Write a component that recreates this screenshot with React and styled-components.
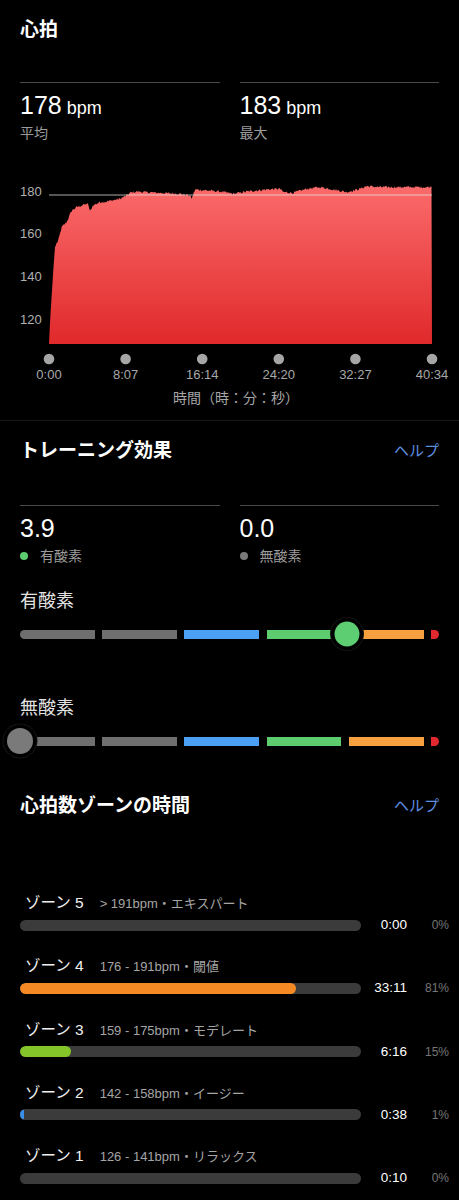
import React from 'react';
import styled, { createGlobalStyle } from 'styled-components';

const GlobalStyle = createGlobalStyle`
  html, body { margin: 0; padding: 0; background: #000; }
  body {
    font-family: "Liberation Sans", "Noto Sans CJK JP", sans-serif;
    color: #fff;
    -webkit-font-smoothing: antialiased;
  }
`;

const Page = styled.div`
  width: 459px;
  background: #000;
  padding-bottom: 12px;
`;

const Section = styled.section`
  padding: 0 20px;
`;

const Title = styled.h2`
  margin: 0;
  padding-top: ${p => p.$top || 0}px;
  font-size: 19px;
  line-height: 24px;
  height: 24px;
  font-weight: 700;
  color: #fff;
  box-sizing: content-box;
`;

const HeaderRow = styled.div`
  display: flex;
  justify-content: space-between;
  align-items: center;
  height: 24px;
  padding-top: ${p => p.$top || 0}px;
  margin-top: ${p => p.$mt || 0}px;
`;

const Help = styled.span`
  font-size: 15px;
  line-height: 24px;
  color: #5d8fe0;
`;

const StatsGrid = styled.div`
  display: grid;
  grid-template-columns: 1fr 1fr;
  column-gap: 20px;
  margin-top: ${p => p.$mt}px;
`;

const Stat = styled.div`
  border-top: 1px solid #4a4a4a;
  padding-top: ${p => p.$pt || 7}px;
`;

const Value = styled.div`
  font-size: 25px;
  line-height: 30px;
  height: 30px;
  color: #fff;
`;

const Unit = styled.span`
  font-size: 18px;
  margin-left: 5px;
`;

const StatLabel = styled.div`
  display: flex;
  align-items: center;
  gap: 12px;
  margin-top: 3px;
  height: 20px;
  font-size: 14px;
  line-height: 20px;
  color: #9c9c9c;
`;

const Dot = styled.span`
  width: 8px;
  height: 8px;
  border-radius: 50%;
  background: ${p => p.$c};
`;

const ChartSvg = styled.svg`
  display: block;
  width: 459px;
  height: 208px;
  margin-top: 37px;
`;

const AxisTitle = styled.div`
  padding-left: 13px;
  text-align: center;
  font-size: 14px;
  line-height: 20px;
  height: 20px;
  color: #a8a8a8;
`;

const Separator = styled.div`
  height: 1px;
  margin-top: 12px;
  background: #161616;
`;

const SubLabel = styled.div`
  margin-top: ${p => p.$mt}px;
  font-size: 18px;
  line-height: 24px;
  height: 24px;
  color: #e2e2e2;
`;

const BarWrap = styled.div`
  position: relative;
  height: 32px;
  margin-top: 5px;
  display: flex;
  align-items: center;
`;

const Segments = styled.div`
  display: flex;
  gap: 7.4px;
  width: 100%;
  height: 9px;
`;

const Seg = styled.div`
  flex: ${p => (p.$tip ? '0 0 8px' : '1 1 0')};
  background: ${p => p.$c};
  border-radius: ${p => (p.$first ? '5px 0 0 5px' : p.$tip ? '0 4.5px 4.5px 0' : '0')};
`;

const Knob = styled.div`
  position: absolute;
  top: 50%;
  left: ${p => p.$pos}%;
  width: ${p => p.$size}px;
  height: ${p => p.$size}px;
  border-radius: 50%;
  background: ${p => p.$c};
  transform: translate(-50%, -50%);
  box-shadow: 0 0 0 3.5px #000, 0 0 0 4.5px #141414;
`;

const ZoneList = styled.div`
  display: flex;
  flex-direction: column;
  gap: 21.3px;
  margin-top: 75px;
  margin-right: -10px;
`;

const Zone = styled.div`
  display: flex;
  flex-direction: column;
`;

const ZoneHead = styled.div`
  display: flex;
  align-items: baseline;
  gap: 16px;
  padding-left: 5px;
  height: 20px;
  line-height: 20px;
`;

const ZoneName = styled.span`
  font-size: 15.5px;
  color: #f0f0f0;
`;

const ZoneRange = styled.span`
  font-size: 13px;
  color: #a5a5a5;
`;

const ZoneBarRow = styled.div`
  display: grid;
  grid-template-columns: 341px 46px 42px;
  align-items: center;
  height: 20px;
  margin-top: 2px;
`;

const Track = styled.div`
  height: 11px;
  border-radius: 6px;
  background: #3b3b3b;
  overflow: hidden;
`;

const Fill = styled.div`
  height: 100%;
  width: ${p => p.$pct}%;
  background: ${p => p.$c};
  border-radius: 6px;
`;

const ZoneTime = styled.span`
  text-align: right;
  font-size: 13.5px;
  line-height: 20px;
  color: #fff;
`;

const ZonePct = styled.span`
  text-align: right;
  font-size: 12px;
  line-height: 20px;
  color: #767676;
`;

/* ---------- chart data ---------- */
const KEY = [
  [49, 344], [50, 322], [53.3, 270], [55, 247], [58.3, 241.7], [61.7, 228.3], [66.7, 223.3],
  [71.7, 211.7], [76.7, 208.3], [86.7, 205], [88.5, 206], [90, 213], [92.7, 206.7], [100, 203.3],
  [106.7, 202.7], [120, 200], [126.7, 196.7], [130, 194], [136.7, 192.7], [143.3, 193.3], [180, 195], [190, 196.7],
  [191.7, 200], [195, 190.7], [220, 192.7], [233.3, 195], [246.7, 192.7], [266.7, 190.7],
  [280, 190], [283.3, 193.3], [293.3, 194], [306.7, 190], [320, 188.3], [333.3, 190.7],
  [346.7, 193.3], [360, 190], [366.7, 187.3], [380, 188.3], [430, 188.3], [432, 185.7],
];

function buildPath() {
  let seed = 12345;
  const rnd = () => {
    seed = (seed * 1103515245 + 12345) % 2147483648;
    return seed / 2147483648;
  };
  const pts = [];
  for (let x = 49; x <= 432; x += 0.75) {
    let i = 0;
    while (i < KEY.length - 2 && KEY[i + 1][0] < x) i++;
    const [x0, y0] = KEY[i];
    const [x1, y1] = KEY[i + 1];
    const t = Math.min(1, Math.max(0, (x - x0) / (x1 - x0)));
    let y = y0 + (y1 - y0) * t;
    if (x > 56 && x < 431) y -= rnd() * 2.4;
    pts.push(`${x.toFixed(2)},${y.toFixed(2)}`);
  }
  return `M49,344 L${pts.join(' L')} L432,344 Z`;
}

const CHART_PATH = buildPath();
const TICKS = [
  [49, '0:00'], [125.6, '8:07'], [202.2, '16:14'], [278.8, '24:20'], [355.4, '32:27'], [432, '40:34'],
];
const YLABELS = [[180, 191], [160, 233.5], [140, 276.5], [120, 319.5]];

function HeartChart() {
  return (
    <ChartSvg viewBox="0 180 459 208">
      <defs>
        <linearGradient id="hr" x1="0" y1="0" x2="0" y2="1">
          <stop offset="0" stopColor="#fb6b6b" />
          <stop offset="1" stopColor="#e0292b" />
        </linearGradient>
      </defs>
      {YLABELS.map(([v, y]) => (
        <text key={v} x="20" y={y + 4.5} fontSize="13" fill="#b0b0b0" fontFamily="Liberation Sans, sans-serif">
          {v}
        </text>
      ))}
      <path d={CHART_PATH} fill="url(#hr)" />
      <line x1="49" x2="432" y1="195" y2="195" stroke="rgba(230,230,230,0.75)" strokeWidth="1" />
      {TICKS.map(([x, t]) => (
        <g key={t}>
          <circle cx={x} cy="359" r="5.3" fill="#a6a6a6" />
          <text x={x} y="378.5" fontSize="13" fill="#a8a8a8" textAnchor="middle" fontFamily="Liberation Sans, sans-serif">
            {t}
          </text>
        </g>
      ))}
    </ChartSvg>
  );
}

const SEGS = ['#6f6f6f', '#6f6f6f', '#4ca0f4', '#5ccc6e', '#f7a03f'];

function EffectBar({ value, knobColor, size }) {
  return (
    <BarWrap>
      <Segments>
        {SEGS.map((c, i) => (
          <Seg key={i} $c={c} $first={i === 0} />
        ))}
        <Seg $c="#e0282e" $tip />
      </Segments>
      <Knob $pos={(value / 5) * 100} $c={knobColor} $size={size} />
    </BarWrap>
  );
}

const ZONES = [
  { name: 'ゾーン 5', range: '> 191bpm', label: 'エキスパート', time: '0:00', pct: 0, color: '#f58a24' },
  { name: 'ゾーン 4', range: '176 - 191bpm', label: '閾値', time: '33:11', pct: 81, color: '#f58a24' },
  { name: 'ゾーン 3', range: '159 - 175bpm', label: 'モデレート', time: '6:16', pct: 15, color: '#84c62a' },
  { name: 'ゾーン 2', range: '142 - 158bpm', label: 'イージー', time: '0:38', pct: 1, color: '#3a8fea', fill: 1.3 },
  { name: 'ゾーン 1', range: '126 - 141bpm', label: 'リラックス', time: '0:10', pct: 0, color: '#9b9b9b' },
];

export default function App() {
  return (
    <Page>
      <GlobalStyle />
      <Section>
        <Title $top={18}>心拍</Title>
        <StatsGrid $mt={40}>
          <Stat>
            <Value>178<Unit>bpm</Unit></Value>
            <StatLabel>平均</StatLabel>
          </Stat>
          <Stat>
            <Value>183<Unit>bpm</Unit></Value>
            <StatLabel>最大</StatLabel>
          </Stat>
        </StatsGrid>
      </Section>
      <HeartChart />
      <AxisTitle>時間（時：分：秒）</AxisTitle>
      <Separator />

      <Section>
        <HeaderRow $top={18}>
          <Title>トレーニング効果</Title>
          <Help>ヘルプ</Help>
        </HeaderRow>
        <StatsGrid $mt={42}>
          <Stat>
            <Value>3.9</Value>
            <StatLabel><Dot $c="#5ccc6e" />有酸素</StatLabel>
          </Stat>
          <Stat>
            <Value>0.0</Value>
            <StatLabel><Dot $c="#7a7a7a" />無酸素</StatLabel>
          </Stat>
        </StatsGrid>
        <SubLabel $mt={23}>有酸素</SubLabel>
        <EffectBar value={3.9} knobColor="#5dce72" size={25} />
        <SubLabel $mt={46}>無酸素</SubLabel>
        <EffectBar value={0} knobColor="#7a7a7a" size={26} />

        <HeaderRow $mt={37}>
          <Title>心拍数ゾーンの時間</Title>
          <Help>ヘルプ</Help>
        </HeaderRow>

        <ZoneList>
          {ZONES.map(z => (
            <Zone key={z.name}>
              <ZoneHead>
                <ZoneName>{z.name}</ZoneName>
                <ZoneRange>{z.range}・{z.label}</ZoneRange>
              </ZoneHead>
              <ZoneBarRow>
                <Track>
                  <Fill $pct={z.fill ?? z.pct} $c={z.color} />
                </Track>
                <ZoneTime>{z.time}</ZoneTime>
                <ZonePct>{z.pct}%</ZonePct>
              </ZoneBarRow>
            </Zone>
          ))}
        </ZoneList>
      </Section>
    </Page>
  );
}
